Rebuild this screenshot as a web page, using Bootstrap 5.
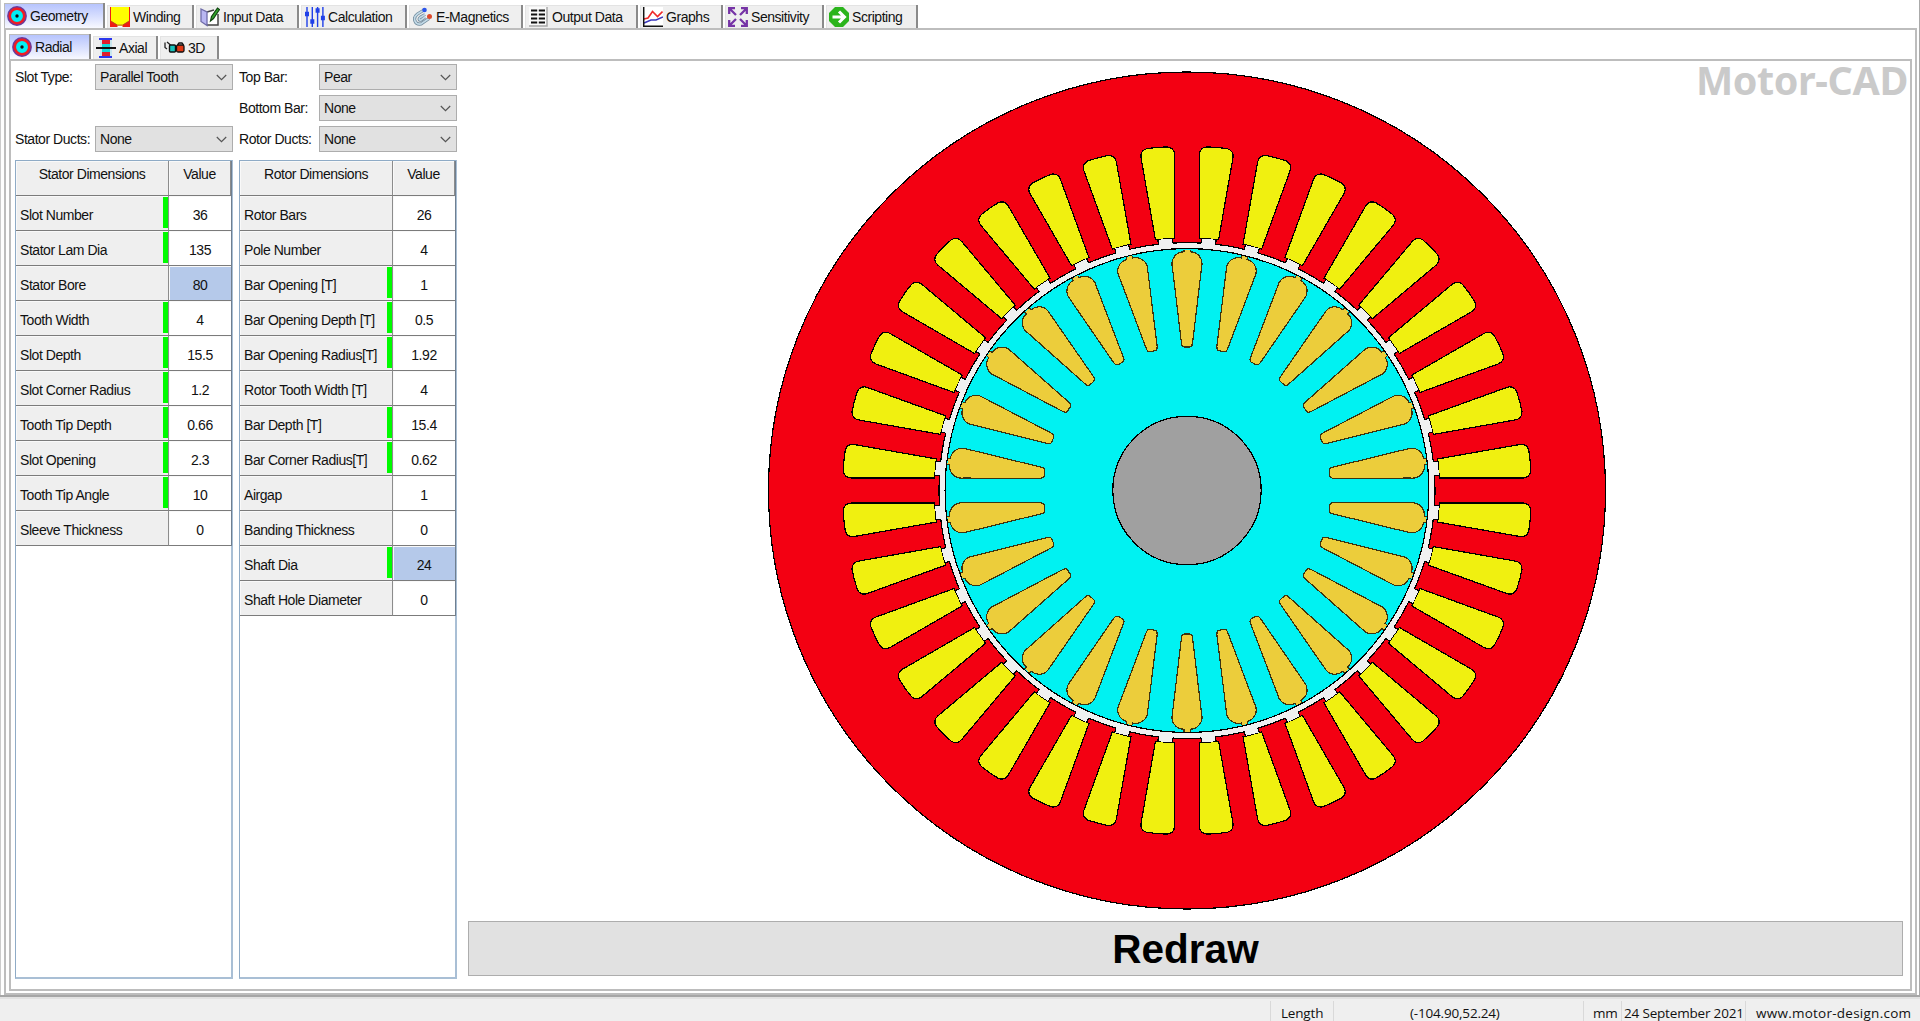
<!DOCTYPE html>
<html lang="en">
<head>
<meta charset="utf-8">
<title>Motor-CAD</title>
<link href="https://cdn.jsdelivr.net/npm/bootstrap@5.3.0/dist/css/bootstrap.min.css" rel="stylesheet">
<style>
  body{font:14px/18px "Liberation Sans",Arial,sans-serif;letter-spacing:-.45px;color:#111;height:1021px;width:1920px;background:#fdfdfd;overflow:hidden}
  .appwin{height:997px;padding:3px 2px 1px 4px;border-right:1px solid #aaa;border-bottom:2px solid #a6a6a6;background:#fff;box-shadow:inset 1px 0 #ccc}
  .tabstrip{height:25px;gap:2px}
  .tabstrip .nav-link{height:23px;padding:0 0 0 3px;background:#efefef;border:0;border-right:2px solid #8a8a8a;border-radius:0;color:#111;white-space:nowrap;gap:3px;box-shadow:inset 1px 1px #e3e3e3}
  .tabstrip .nav-link svg{flex:none}
  .tabstrip .nav-link.active{height:25px;background:linear-gradient(#b4c2fd,#dce2fe 60%,#f8f9ff);color:#111;box-shadow:inset 1px 1px #bbb;padding-top:1px}
  .page-outer{height:967px;border:2px solid #bdbdbd;padding:4px 3px 3px 3px}
  .page-inner{height:932px;border:2px solid #bdbdbd;padding:3px 8px 8px 4px}
  .sidepane{width:443px;flex:none;gap:6px}
  .sidecol{width:218px;height:918px;flex:none}
  .field{height:26px;margin-bottom:5px}
  .field label{width:80px;flex:none;white-space:nowrap}
  .field .form-select{width:138px;height:26px;flex:none;padding:0 0 0 4px;font:inherit;letter-spacing:inherit;color:#111;border:1px solid #adadad;border-radius:0;background-color:#e1e1e1;background-size:11px 7px;background-position:right 5px center;background-image:url("data:image/svg+xml,%3csvg xmlns='http://www.w3.org/2000/svg' viewBox='0 0 11 7'%3e%3cpath d='M.8 1l4.7 4.7L10.2 1' fill='none' stroke='%23555' stroke-width='1.2'/%3e%3c/svg%3e")}
  .gridbox{height:819px;margin-top:8px;border:1px solid #8fabc6;border-right-width:2px;border-right-color:#a9bfd5;border-bottom:2px solid #a9bfd5}
  .gridbox .table{margin:0;width:216px;table-layout:fixed;border-collapse:separate;border-spacing:0;color:#111;border-right:1px solid #6f7f90}
  .gridbox .table>:not(caption)>*>*{height:35px;padding:3px 0 0 4px;border:0;border-bottom:1px solid #7b7b7b;border-right:1px solid #8c8c8c;background:#efefef;font-weight:400;vertical-align:middle;white-space:nowrap;box-shadow:inset 1px 1px #f9f9f9}
  .gridbox .table>thead>tr>th{height:35px;text-align:center;padding:0 0 9px}
  .gridbox .table>tbody>tr>td:last-child{background:#fff;text-align:center;border-right:0;padding-left:0}
  .gridbox .table>tbody>tr>td.picked{background:#b5c9ea}
  .gridbox .table>tbody>tr>td.flag{background:linear-gradient(#00fb00,#00fb00) right 0 top 1px/5px 31px no-repeat #efefef}
  .canvaspane{position:relative;margin-left:10px;margin-right:1px}
  .brand{position:absolute;right:-5px;top:-4px;font:700 39.5px/40px "Noto Sans","Open Sans",sans-serif;color:#cacaca;letter-spacing:-.4px}
  .redraw{height:55px;font:700 40.5px/52px "Liberation Sans",Arial,sans-serif;letter-spacing:0;background:#e1e1e1;border:1px solid #adadad;border-radius:0;padding:0;color:#000}
  .statusline{height:24px;background:#efefef;padding-top:2px;font:13.5px/20px "Open Sans","Noto Sans",sans-serif;letter-spacing:-.18px;border-top:2px solid #e2e2e2}
  .statusline>div{height:20px;border-left:1px solid #d9d9d9;white-space:nowrap;flex:none;padding-left:2px;padding-top:2px}
  .statusline>.site{width:175px;padding-left:10px;letter-spacing:.25px}
</style>
</head>
<body>
<svg width="0" height="0" class="position-absolute">
  <symbol id="i-geo" viewBox="0 0 20 20"><circle cx="10" cy="10" r="8.700" fill="#00e9f2" stroke="#6a3a9c" stroke-width="2.400"/><circle cx="10" cy="10" r="7.200" fill="#00f0f4" stroke="#ee1c24" stroke-width="2.500"/><circle cx="10" cy="10" r="1.700" fill="#111"/></symbol>
</svg>
<div class="appwin">
  <nav class="nav tabstrip flex-nowrap align-items-end">
    <a class="nav-link active d-flex align-items-center" style="width:101px"><svg width="20" height="20"><use href="#i-geo"/></svg><span>Geometry</span></a>
    <a class="nav-link d-flex align-items-center" style="width:87px"><svg width="20" height="20" viewBox="0 0 20 20"><path fill="#ef1c14" d="M0 0h20v20H0z"/><path d="M1 0h18v14l-6 3.500v1H7v-1l-6-3.500z" fill="#ff0"/><path d="M7.500 20v-1.300h5V20z" fill="#fff"/><path d="M1 14l6 4h6l6-4" fill="none" stroke="#a8581c" stroke-width=".8"/></svg><span>Winding</span></a>
    <a class="nav-link d-flex align-items-center ps-1" style="width:103px"><svg width="20" height="20" viewBox="0 0 20 20"><path d="M7 5l6-2 5 2v13H7z" fill="#fff"/><path d="M7 5l7-2M18 7v11H7" fill="none" stroke="#444" stroke-width="1.500"/><path d="M1 2l6 3v13.500l-6-4z" fill="#b9b7f2" stroke="#6f6ca9" stroke-width="1.300"/><path d="M10.500 14l1-4.500 6-8.500 2 1.500-6 9z" fill="#31a52b" stroke="#141" stroke-width="1.200"/></svg><span>Input Data</span></a>
    <a class="nav-link d-flex align-items-center ps-1" style="width:106px"><svg width="20" height="20" viewBox="0 0 20 20"><path d="M2 0v20M7.300 0v20M12.600 0v20M17.900 0v20" stroke="#2040e8" stroke-width="1.400"/><path d="M0 7h4M5.300 14.500h4M10.600 3.500h4M15.900 11h4" stroke="#2040e8" stroke-width="4.500"/></svg><span>Calculation</span></a>
    <a class="nav-link d-flex align-items-center ps-1" style="width:114px"><svg width="20" height="20" viewBox="0 0 20 20"><path d="M11 3L4.500 7C-1 11 2 18 8 17L16 11.500M12 7.500L7.500 10.200C5 12 6.500 13.500 8 13L12 10" fill="none" stroke="#70899b" stroke-width="3.200"/><path d="M11 3L4.500 7C-1 11 2 18 8 17L16 11.500M12 7.500L7.500 10.200C5 12 6.500 13.500 8 13L12 10" fill="none" stroke="#c2d9e6" stroke-width="1.600"/><circle cx="11.500" cy="3" r="2.300" fill="#2b54ea"/><circle cx="16.500" cy="9.500" r="2.500" fill="#dd4a2c"/></svg><span>E-Magnetics</span></a>
    <a class="nav-link d-flex align-items-center ps-1" style="width:113px"><svg width="20" height="20" viewBox="0 0 20 20"><path fill="#fafafa" d="M0 0h18v18H0z"/><path d="M18 0v19H0" fill="none" stroke="#aaa" stroke-width="1.500"/><path d="M2 3.500h14M2 7.500h14M2 11.500h14M2 15.500h14" stroke="#111" stroke-width="2" stroke-dasharray="6.200 1.600"/></svg><span>Output Data</span></a>
    <a class="nav-link d-flex align-items-center" style="width:83px"><svg width="20" height="20" viewBox="0 0 20 20"><path fill="#fff" d="M0 0h20v20H0z"/><path d="M1 12l4-1 4.500-6.500 5 5 5-5" fill="none" stroke="#ef2929" stroke-width="1.600"/><path d="M1 16l7-3h5l7-3" fill="none" stroke="#3a38bd" stroke-width="1.400"/><path d="M.700 0v19.200H20" fill="none" stroke="#111" stroke-width="1.500"/></svg><span>Graphs</span></a>
    <a class="nav-link d-flex align-items-center" style="width:99px"><svg width="20" height="20" viewBox="0 0 20 20"><path d="M1.200 7V1.200H7M13 1.200h5.800V7M18.800 13v5.800H13M7 18.800H1.200V13M2 2l6 6M18 2l-6 6M18 18l-6-6M2 18l6-6" fill="none" stroke="#7634a6" stroke-width="2.300"/></svg><span>Sensitivity</span></a>
    <a class="nav-link d-flex align-items-center" style="width:92px"><svg width="20" height="20" viewBox="0 0 20 20"><path d="M6 0h8l6 6v8l-6 6H6l-6-6V6z" fill="#2bb41c"/><path d="M3.500 10h11M10 4.500l5.500 5.500-5.500 5.500" fill="none" stroke="#fff" stroke-width="3"/></svg><span>Scripting</span></a>
  </nav>
  <main class="page-outer">
    <nav class="nav tabstrip flex-nowrap align-items-end">
      <a class="nav-link active d-flex align-items-center" style="width:82px"><svg width="20" height="20"><use href="#i-geo"/></svg><span>Radial</span></a>
      <a class="nav-link d-flex align-items-center" style="width:65px"><svg width="20" height="20" viewBox="0 0 20 20"><path fill="#c9e6ee" d="M4 1h12v18H4z"/><path d="M6 6h8v8H6z" fill="#12d8d8"/><path d="M6 2h8v4H6zM6 14h8v4H6z" fill="#e01d2c"/><path d="M3 1h13M3 19h13" stroke="#2c38ec" stroke-width="2"/><path d="M0 10h20" stroke="#111" stroke-width="2"/></svg><span>Axial</span></a>
      <a class="nav-link d-flex align-items-center ps-1" style="width:59px"><svg width="21" height="20" viewBox="0 0 21 20"><path d="M1 4.500v5l2 1.500M3 4l3.500 3" fill="none" stroke="#222" stroke-width="1.300"/><rect x="5.500" y="7" width="6" height="7" rx="1" fill="#16c4bd" stroke="#111" stroke-width="1.400"/><path d="M13.500 7l1.500-2h3l1.500 2" fill="none" stroke="#111" stroke-width="1.300"/><rect x="12.500" y="7" width="7.500" height="7" rx="1.500" fill="#e23813" stroke="#111" stroke-width="1.300"/></svg><span>3D</span></a>
    </nav>
    <section class="page-inner d-flex">
      <aside class="sidepane d-flex">
        <div class="sidecol">
          <div class="field d-flex align-items-center"><label>Slot Type:</label><select class="form-select"><option>Parallel Tooth</option></select></div>
          <div class="field"></div>
          <div class="field d-flex align-items-center"><label>Stator Ducts:</label><select class="form-select"><option>None</option></select></div>
          <div class="gridbox">
            <table class="table">
              <colgroup><col style="width:153px"><col></colgroup>
              <thead><tr><th>Stator Dimensions</th><th>Value</th></tr></thead>
              <tbody>
                <tr><td class="flag">Slot Number</td><td>36</td></tr>
                <tr><td class="flag">Stator Lam Dia</td><td>135</td></tr>
                <tr><td>Stator Bore</td><td class="picked">80</td></tr>
                <tr><td class="flag">Tooth Width</td><td>4</td></tr>
                <tr><td class="flag">Slot Depth</td><td>15.5</td></tr>
                <tr><td class="flag">Slot Corner Radius</td><td>1.2</td></tr>
                <tr><td class="flag">Tooth Tip Depth</td><td>0.66</td></tr>
                <tr><td class="flag">Slot Opening</td><td>2.3</td></tr>
                <tr><td class="flag">Tooth Tip Angle</td><td>10</td></tr>
                <tr><td>Sleeve Thickness</td><td>0</td></tr>
              </tbody>
            </table>
          </div>
        </div>
        <div class="sidecol">
          <div class="field d-flex align-items-center"><label>Top Bar:</label><select class="form-select"><option>Pear</option></select></div>
          <div class="field d-flex align-items-center"><label>Bottom Bar:</label><select class="form-select"><option>None</option></select></div>
          <div class="field d-flex align-items-center"><label>Rotor Ducts:</label><select class="form-select"><option>None</option></select></div>
          <div class="gridbox">
            <table class="table">
              <colgroup><col style="width:153px"><col></colgroup>
              <thead><tr><th>Rotor Dimensions</th><th>Value</th></tr></thead>
              <tbody>
                <tr><td>Rotor Bars</td><td>26</td></tr>
                <tr><td>Pole Number</td><td>4</td></tr>
                <tr><td class="flag">Bar Opening [T]</td><td>1</td></tr>
                <tr><td class="flag">Bar Opening Depth [T]</td><td>0.5</td></tr>
                <tr><td class="flag">Bar Opening Radius[T]</td><td>1.92</td></tr>
                <tr><td>Rotor Tooth Width [T]</td><td>4</td></tr>
                <tr><td class="flag">Bar Depth [T]</td><td>15.4</td></tr>
                <tr><td class="flag">Bar Corner Radius[T]</td><td>0.62</td></tr>
                <tr><td>Airgap</td><td>1</td></tr>
                <tr><td>Banding Thickness</td><td>0</td></tr>
                <tr><td class="flag">Shaft Dia</td><td class="picked">24</td></tr>
                <tr><td>Shaft Hole Diameter</td><td>0</td></tr>
              </tbody>
            </table>
          </div>
        </div>
      </aside>
      <div class="canvaspane d-flex flex-column flex-grow-1">
        <svg id="motor" width="1435" height="857" viewBox="-719 -426.500 1435 857" shape-rendering="crispEdges" stroke="#000" stroke-width="1.200">
          <defs>
            <g id="slot">
              <path d="M-9.600-252.500L-16.800-335.500Q-17.200-342.500-10.500-344Q0-344.800 10.500-344Q17.200-342.500 16.800-335.500L9.600-252.500Z" fill="#f0f010"/>
              <path d="M-7.100-246V-252.300H7.100V-246Z" fill="#f0f0f0" stroke="none"/>
              <path d="M-7.100-247.500V-252.300M7.100-247.500V-252.300" fill="none"/>
            </g>
            <path id="bar" d="M-3.100-241V-238.700A11.900 11.900 0 0 0-14.700-224L-5.500-147Q-5-143.500-2.500-143.500H2.500Q5-143.500 5.500-147L14.700-224A11.900 11.900 0 0 0 3.100-238.700V-241" fill="#eccd3b" stroke="#3d3410"/>
          </defs>
          <circle r="418.500" fill="#f30012"/>
          <circle r="248" fill="#f0f0f0"/>
          <g id="slots"></g>
          <circle r="241.900" fill="#00f2f2"/>
          <g id="bars"></g>
          <circle r="74.200" fill="#a0a0a0"/>
        </svg>
        <div class="brand">Motor-CAD</div>
        <button class="btn redraw">Redraw</button>
      </div>
    </section>
  </main>
</div>
<footer class="statusline d-flex">
  <div class="flex-grow-1 border-0"></div>
  <div style="width:63px;padding-left:10px">Length</div>
  <div style="width:250px;padding-left:76px">(-104.90,52.24)</div>
  <div style="width:38px;padding-left:9px">mm</div>
  <div style="width:124px">24 September 2021</div>
  <div class="site">www.motor-design.com</div>
</footer>
<script>
  // Repeat one shape evenly round the shaft axis
  function ring(target, shape, count, start) {
    const g = document.getElementById(target);
    for (let i = 0; i < count; i++) {
      const u = document.createElementNS('http://www.w3.org/2000/svg', 'use');
      u.setAttribute('href', shape);
      u.setAttribute('transform', 'rotate(' + (start + i * 360 / count) + ')');
      g.appendChild(u);
    }
  }
  ring('slots', '#slot', 36, 5);
  ring('bars', '#bar', 26, 0);
</script>
<script src="https://cdn.jsdelivr.net/npm/bootstrap@5.3.0/dist/js/bootstrap.bundle.min.js"></script>
</body>
</html>
